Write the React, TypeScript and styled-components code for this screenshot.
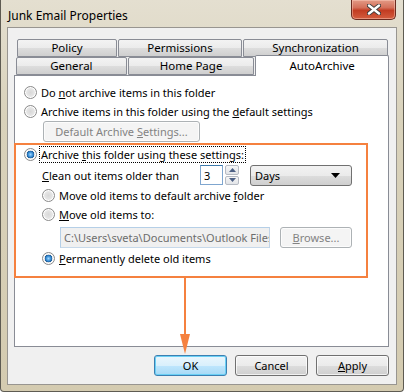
import React from 'react';
import styled, {createGlobalStyle} from "styled-components";

const GlobalStyle = createGlobalStyle`
  html, body {
    margin: 0;
    padding: 0;
    background: #ffffff;
  }
  body {
    font-family: "Noto Sans", "Open Sans", sans-serif;
    font-size: 11px;
    color: #000;
  }
`

const orange = '#f5813f'

export default function App() {
    return (
        <>
            <GlobalStyle/>
            <Window>
                <TitleBar>
                    <Title>Junk Email Properties</Title>
                    <CloseButton aria-label="Close">
                        <svg width="14" height="11" viewBox="0 0 14 11">
                            <path d="M2 1.5 L12 9.5 M12 1.5 L2 9.5" stroke="#3b3b3b" strokeWidth="4.2" strokeLinecap="round"/>
                            <path d="M2 1.5 L12 9.5 M12 1.5 L2 9.5" stroke="#ffffff" strokeWidth="2.4" strokeLinecap="round"/>
                        </svg>
                    </CloseButton>
                </TitleBar>
                <Client>
                    <TabStrip>
                        <TabRow $offset={3}>
                            <Tab $width={100}>Policy</Tab>
                            <Tab $width={124}>Permissions</Tab>
                            <Tab $width={145}>Synchronization</Tab>
                        </TabRow>
                        <TabRow $offset={2}>
                            <Tab $width={111}>General</Tab>
                            <Tab $width={127}>Home Page</Tab>
                            <Tab $width={134} $active>AutoArchive</Tab>
                        </TabRow>
                    </TabStrip>
                    <Panel>
                        <OptionRow>
                            <Radio/>
                            <Label>Do <u>n</u>ot archive items in this folder</Label>
                        </OptionRow>
                        <OptionRow>
                            <Radio/>
                            <Label>Archive items in this folder using the <u>d</u>efault settings</Label>
                        </OptionRow>
                        <PushButton disabled $width={157} $indent={19}>
                            <span>Default Archive <u>S</u>ettings...</span>
                        </PushButton>
                        <Highlight>
                            <OptionRow>
                                <Radio $checked/>
                                <Label $focused>Archive <u>t</u>his folder using these settings:</Label>
                            </OptionRow>
                            <CleanRow>
                                <CleanLabel><u>C</u>lean out items older than</CleanLabel>
                                <NumberBox>3</NumberBox>
                                <Spinner>
                                    <SpinHalf>
                                        <svg width="7" height="4" viewBox="0 0 7 4"><path d="M0 4 L3.5 0 L7 4 Z" fill="#4d6185"/></svg>
                                    </SpinHalf>
                                    <SpinHalf>
                                        <svg width="7" height="4" viewBox="0 0 7 4"><path d="M0 0 L3.5 4 L7 0 Z" fill="#4d6185"/></svg>
                                    </SpinHalf>
                                </Spinner>
                                <Select>
                                    <span>Days</span>
                                    <svg width="9" height="5" viewBox="0 0 9 5"><path d="M0 0 L9 0 L4.5 5 Z" fill="#000"/></svg>
                                </Select>
                            </CleanRow>
                            <OptionRow $indent={18}>
                                <Radio/>
                                <Label>Move old items to default archive <u>f</u>older</Label>
                            </OptionRow>
                            <OptionRow $indent={18}>
                                <Radio/>
                                <Label><u>M</u>ove old items to:</Label>
                            </OptionRow>
                            <PathRow>
                                <PathBox>C:\Users\sveta\Documents\Outlook Files</PathBox>
                                <PushButton disabled $width={72}><span><u>B</u>rowse...</span></PushButton>
                            </PathRow>
                            <OptionRow $indent={18}>
                                <Radio $checked/>
                                <Label><u>P</u>ermanently delete old items</Label>
                            </OptionRow>
                        </Highlight>
                    </Panel>
                    <ButtonRow>
                        <PushButton $width={73} $default>OK</PushButton>
                        <PushButton $width={73}>Cancel</PushButton>
                        <PushButton $width={73}><span><u>A</u>pply</span></PushButton>
                    </ButtonRow>
                </Client>
                <Arrow width="12" height="77" viewBox="0 0 12 77">
                    <line x1="6" y1="0" x2="6" y2="60" stroke={orange} strokeWidth="2"/>
                    <path d="M1 56 L11 56 L6 76 Z" fill={orange}/>
                </Arrow>
            </Window>
        </>
    );
}

const Window = styled.div`
  position: relative;
  width: 404px;
  height: 392px;
  box-sizing: border-box;
  display: flex;
  flex-direction: column;
  padding: 0 6px 6px 6px;
  border: 1px solid #5e5b52;
  border-top: none;
  border-radius: 0 0 4px 4px;
  background: linear-gradient(180deg, #e4dfd0 0%, #d9d2bb 30%, #d4cbb0 100%);
`
const TitleBar = styled.div`
  height: 27px;
  display: flex;
  align-items: flex-start;
  justify-content: space-between;
`
const Title = styled.span`
  font-size: 12px;
  line-height: 31px;
  margin-left: 1px;
  color: #000;
`
const CloseButton = styled.div`
  width: 45px;
  height: 20px;
  margin-right: 1px;
  box-sizing: border-box;
  display: flex;
  align-items: center;
  justify-content: center;
  border: 1px solid #6b2b20;
  border-top: none;
  border-radius: 0 0 5px 5px;
  background: linear-gradient(180deg, #e39a86 0%, #d4705a 40%, #c23c22 55%, #d45d3f 100%);
  box-shadow: inset 0 0 0 1px rgba(255, 210, 195, 0.45);
`
const Client = styled.div`
  flex: 1;
  display: flex;
  flex-direction: column;
  box-sizing: border-box;
  padding: 11px 7px 0 6px;
  background: #f0f0f0;
  border: 1px solid #989590;
`
const TabStrip = styled.div`
  display: flex;
  flex-direction: column;
  height: 36px;
`
const TabRow = styled.div<{ $offset: number }>`
  display: flex;
  height: 18px;
  align-items: flex-end;
  padding-left: ${p => p.$offset}px;
`
const Tab = styled.div<{ $width: number; $active?: boolean }>`
  position: relative;
  box-sizing: border-box;
  width: ${p => p.$width}px;
  height: ${p => p.$active ? 21 : 18}px;
  margin-bottom: ${p => p.$active ? -1 : 0}px;
  margin-right: ${p => p.$active ? 0 : 1}px;
  z-index: ${p => p.$active ? 2 : 1};
  display: flex;
  justify-content: center;
  align-items: ${p => p.$active ? 'flex-start' : 'center'};
  padding-top: ${p => p.$active ? 2 : 0}px;
  border: 1px solid #898c95;
  border-bottom: ${p => p.$active ? 'none' : '1px solid #898c95'};
  border-radius: 2px 2px 0 0;
  background: ${p => p.$active ? '#ffffff' : 'linear-gradient(180deg, #f3f3f3 0%, #ebebeb 50%, #dddddd 51%, #cfcfcf 100%)'};
  font-size: 11.5px;
  line-height: 16px;
`
const Panel = styled.div`
  position: relative;
  z-index: 1;
  height: 272px;
  box-sizing: border-box;
  display: flex;
  flex-direction: column;
  padding: 7px 0 0 9px;
  background: #ffffff;
  border: 1px solid #898c95;
`
const OptionRow = styled.div<{ $indent?: number }>`
  display: flex;
  align-items: center;
  gap: 3px;
  height: 19px;
  padding-left: ${p => p.$indent ?? 0}px;
`
const Radio = styled.span<{ $checked?: boolean }>`
  width: 13px;
  height: 13px;
  box-sizing: border-box;
  flex-shrink: 0;
  border-radius: 50%;
  border: 1px solid #8a8a8a;
  background: ${p => p.$checked
    ? 'radial-gradient(circle, #9fd7ff 0%, #3b8fd6 30%, #1b5a96 48%, #e8e8e8 52%, #f6f6f6 100%)'
    : 'radial-gradient(circle, #d8d8d8 0%, #e4e4e4 45%, #f8f8f8 100%)'};
  box-shadow: inset 0 0 0 1px #ffffff;
`
const Label = styled.span<{ $focused?: boolean }>`
  font-size: 11px;
  line-height: 15px;
  padding: 0 1px;
  outline: ${p => p.$focused ? '1px dotted #000' : 'none'};
  white-space: nowrap;
`
const PushButton = styled.div<{ $width: number; $indent?: number; disabled?: boolean; $default?: boolean }>`
  width: ${p => p.$width}px;
  height: 21px;
  box-sizing: border-box;
  flex-shrink: 0;
  margin-left: ${p => p.$indent ?? 0}px;
  display: flex;
  align-items: center;
  justify-content: center;
  border-radius: 3px;
  font-size: 11px;
  white-space: nowrap;
  border: 1px solid ${p => p.disabled ? '#adb2b5' : p.$default ? '#3c7fb1' : '#707070'};
  color: ${p => p.disabled ? '#838383' : '#000'};
  background: ${p => p.disabled
    ? '#f4f4f4'
    : p.$default
        ? 'linear-gradient(180deg, #eaf6fd 0%, #d9f0fc 50%, #bee6fd 51%, #a7d9f5 100%)'
        : 'linear-gradient(180deg, #f2f2f2 0%, #ebebeb 50%, #dddddd 51%, #cfcfcf 100%)'};
  box-shadow: ${p => p.$default ? 'inset 0 0 0 1px #6ad0f5' : 'inset 0 0 0 1px rgba(255,255,255,0.7)'};
`
const Highlight = styled.div`
  margin: 1px 0 0 -10px;
  width: 354px;
  height: 135px;
  box-sizing: border-box;
  display: flex;
  flex-direction: column;
  padding: 0 0 0 8px;
  border: 2px solid ${orange};
`
const CleanRow = styled.div`
  display: flex;
  align-items: center;
  height: 22px;
  padding-left: 18px;
`
const CleanLabel = styled.span`
  width: 158px;
  white-space: nowrap;
`
const NumberBox = styled.div`
  width: 23px;
  height: 20px;
  box-sizing: border-box;
  padding-left: 3px;
  display: flex;
  align-items: center;
  border: 1px solid #7fa6cf;
  border-top-color: #3d7bad;
  background: #fff;
`
const Spinner = styled.div`
  display: flex;
  flex-direction: column;
  gap: 1px;
  margin-left: 2px;
  height: 20px;
`
const SpinHalf = styled.div`
  width: 14px;
  flex: 1;
  box-sizing: border-box;
  display: flex;
  align-items: center;
  justify-content: center;
  border: 1px solid #b5bac3;
  border-radius: 2px;
  background: linear-gradient(180deg, #f6f6f6, #e2e4e8);
`
const Select = styled.div`
  margin-left: 11px;
  width: 102px;
  height: 21px;
  box-sizing: border-box;
  display: flex;
  align-items: center;
  justify-content: space-between;
  padding: 0 11px 0 4px;
  border: 1px solid #707070;
  border-radius: 3px;
  background: linear-gradient(180deg, #f2f2f2 0%, #ebebeb 50%, #dddddd 51%, #cfcfcf 100%);
`
const PathRow = styled.div`
  display: flex;
  align-items: center;
  gap: 10px;
  height: 24px;
  padding: 1px 0 0 36px;
`
const PathBox = styled.div`
  width: 210px;
  height: 21px;
  box-sizing: border-box;
  overflow: hidden;
  white-space: nowrap;
  padding-left: 3px;
  line-height: 19px;
  color: #6d6d6d;
  background: #f0f0f0;
  border: 1px solid #abadb3;
  border-color: #b5cfe7 #c0d4e8 #c7d9ea #b5cfe7;
`
const ButtonRow = styled.div`
  display: flex;
  justify-content: flex-end;
  gap: 8px;
  margin-top: 8px;
`
const Arrow = styled.svg`
  position: absolute;
  left: 178px;
  top: 278px;
  z-index: 3;
`
